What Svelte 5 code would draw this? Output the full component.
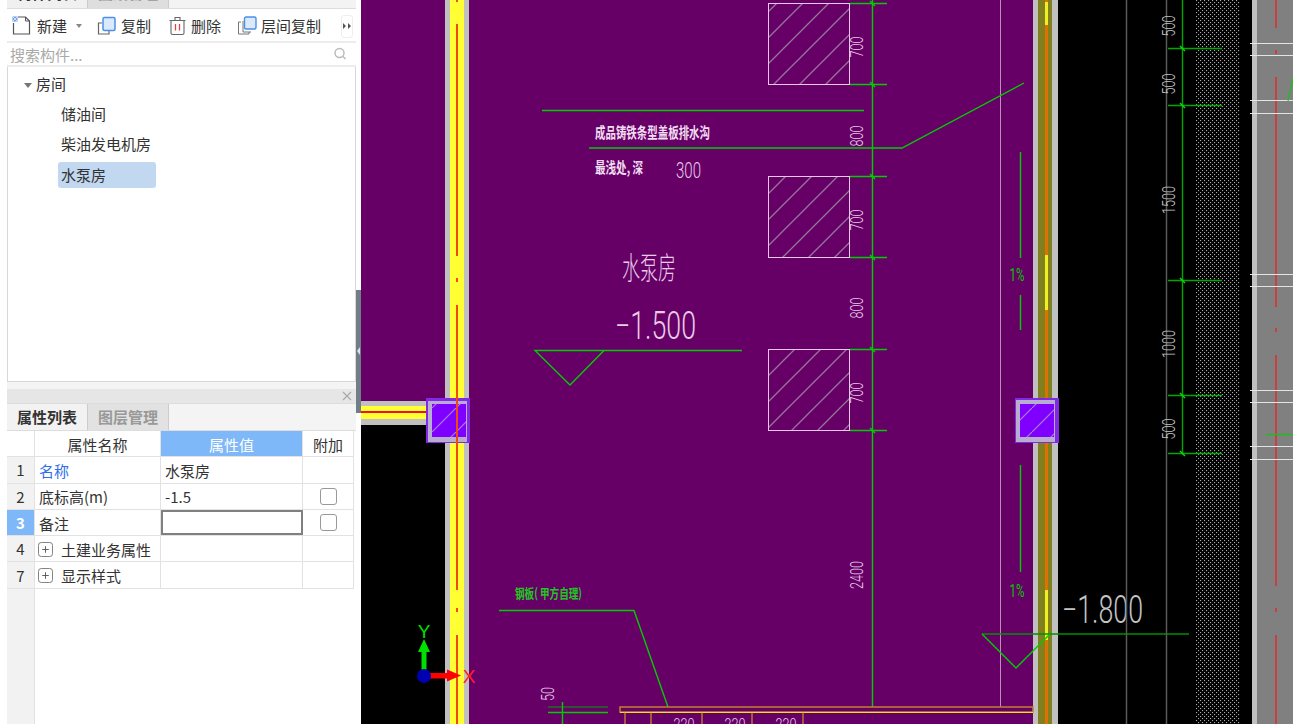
<script>
  const ticks = [3, 84, 176, 257, 349, 430];
  const dims = [
    { y: 47, t: '700' }, { y: 136, t: '800' }, { y: 220, t: '700' },
    { y: 308, t: '800' }, { y: 393, t: '700' }, { y: 575, t: '2400' }
  ];
  const squares = [3, 176, 349];
  const rightDims = [
    { y: 26, t: '500' }, { y: 84, t: '500' }, { y: 200, t: '1500' },
    { y: 344, t: '1000' }, { y: 429, t: '500' }
  ];
  const rightTicks = [48, 105, 280, 395, 453];
  const strips = [43, 55, 100, 113, 274, 286, 390, 402, 446, 459];
  const wallRed = [[0, 2], [24, 256], [278, 282], [305, 590], [608, 612], [635, 724]];
  const stripRed = [[0, 28], [50, 54], [77, 307], [328, 332], [355, 586], [608, 612], [635, 724]];
  const rightYellow = [[2, 25], [255, 310], [590, 640]];
  const beamTicks = [625, 651, 702, 752, 803];
  const beamText = [684, 735, 786];
  const rows = [
    { n: '1', name: '名称', val: '水泵房', link: true },
    { n: '2', name: '底标高(m)', val: '-1.5', check: true },
    { n: '3', name: '备注', val: '', check: true, active: true },
    { n: '4', name: '土建业务属性', val: '', plus: true },
    { n: '7', name: '显示样式', val: '', plus: true }
  ];
  const dimLen = (t) => (t.length === 4 ? 28 : t.length === 2 ? 14 : 21);
</script>

<div class="app">
  <aside class="side">
    <div class="tabs-top">
      <div class="ttab on">构件列表</div>
      <div class="ttab">图纸管理</div>
    </div>

    <div class="toolbar">
      <div class="tool first">
        <svg width="20" height="20" viewBox="0 0 20 20" fill="none">
          <path d="M1.5 7v11h16V5l-4-4H6" stroke="#555" stroke-width="1.2"/>
          <path d="M13.5 1v4h4" stroke="#555" stroke-width="1"/>
          <rect x="0.5" y="0.5" width="5" height="5" fill="#6d9fe8"/>
          <path d="M1 1l4 4M5 1l-4 4" stroke="#fff" stroke-width=".7"/>
        </svg>
        <span>新建</span>
        <i class="caret"></i>
      </div>
      <div class="tool copy">
        <svg width="20" height="20" viewBox="0 0 20 20" fill="none">
          <path d="M5 7H1.5v11H12v-3" stroke="#666" stroke-width="1.2"/>
          <rect x="6" y="1.5" width="12" height="13" rx="1.5" fill="#dce9fb" stroke="#4a90e8" stroke-width="1.5"/>
        </svg>
        <span>复制</span>
      </div>
      <div class="tool del">
        <svg width="17" height="20" viewBox="0 0 17 20" fill="none">
          <path d="M0.5 4.5h16M6 4.5V1.5h5v3M2 4.5V17a1.5 1.5 0 0 0 1.5 1.5h10A1.5 1.5 0 0 0 15 17V4.500" stroke="#666" stroke-width="1.1"/>
          <path d="M6.500 8v6.500M10.500 8v6.500" stroke="#e8413c" stroke-width="1.300"/>
        </svg>
        <span>删除</span>
      </div>
      <div class="tool layer">
        <svg width="20" height="20" viewBox="0 0 20 20" fill="none">
          <path d="M4 6H1.500v12H12v-2" stroke="#777" stroke-width="1"/>
          <path d="M6 5v11h8" stroke="#777" stroke-width="1"/>
          <rect x="7.500" y="1" width="11.500" height="12" rx="1.500" fill="#dce9fb" stroke="#4a90e8" stroke-width="1.400"/>
        </svg>
        <span>层间复制</span>
      </div>
      <div class="more">
        <svg width="8" height="6" viewBox="0 0 8 6"><path d="M0 0l3 3-3 3zM5 0l3 3-3 3z" fill="#555"/></svg>
      </div>
    </div>

    <div class="search">
      <span>搜索构件...</span>
      <svg width="14" height="14" viewBox="0 0 14 14" fill="none">
        <circle cx="6.500" cy="6" r="4.500" stroke="#bbb" stroke-width="1.500"/>
        <path d="M10 9.500l2.500 2.500" stroke="#bbb" stroke-width="1.500"/>
      </svg>
    </div>

    <div class="tree">
      <div class="node root"><i class="tri"></i>房间</div>
      <div class="node leaf">储油间</div>
      <div class="node leaf">柴油发电机房</div>
      <div class="node leaf sel">水泵房</div>
    </div>

    <div class="gap"></div>

    <div class="pane-head">
      <svg width="10" height="10" viewBox="0 0 10 10"><path d="M1 1l8 8M9 1l-8 8" stroke="#aaa" stroke-width="1.200"/></svg>
    </div>

    <div class="ptabs">
      <div class="ptab on">属性列表</div>
      <div class="ptab">图层管理</div>
    </div>

    <div class="grid">
      <div class="row head">
        <div class="c idx"></div>
        <div class="c cname">属性名称</div>
        <div class="c cval hl">属性值</div>
        <div class="c cadd">附加</div>
      </div>
      {#each rows as r}
        <div class="row">
          <div class="c idx" class:idxon={r.active}>{r.n}</div>
          <div class="c nm" class:link={r.link}>
            {#if r.plus}
              <svg class="plus" width="16" height="16" viewBox="0 0 16 16" fill="none">
                <rect x=".5" y=".5" width="15" height="15" rx="3" stroke="#777"/>
                <path d="M4.500 8h7M8 4.500v7" stroke="#555"/>
              </svg>
            {/if}
            {r.name}
          </div>
          <div class="c vl" class:cur={r.active}>{r.val}</div>
          <div class="c ck">
            {#if r.check}<span class="box"></span>{/if}
          </div>
        </div>
      {/each}
      <div class="rest"><div class="restidx"></div></div>
    </div>
  </aside>

  <div class="split">
    <div class="split-dark"><i class="notch"></i></div>
  </div>

  <svg class="cad" width="932" height="724" viewBox="361 0 932 724">
    <defs>
      <pattern id="hatch" patternUnits="userSpaceOnUse" width="26" height="26">
        <path d="M-1 27L27 -1" stroke="#96749a" stroke-width="1.300"/>
        <path d="M-1 1L1 -1M25 27L27 25" stroke="#96749a" stroke-width="1.300"/>
      </pattern>
      <pattern id="colhatch" patternUnits="userSpaceOnUse" width="24" height="24">
        <path d="M0 24L24 0" stroke="#a880d8" stroke-width="1.200"/>
      </pattern>
      <pattern id="dots" patternUnits="userSpaceOnUse" width="4" height="4">
        <rect x="0" y="0" width="1.100" height="1.100" fill="#aaa"/>
        <rect x="2" y="2" width="1.100" height="1.100" fill="#aaa"/>
      </pattern>
    </defs>

    <rect x="361" y="0" width="932" height="724" fill="#660066"/>
    <rect x="361" y="424" width="84" height="300" fill="#000"/>
    <rect x="1058" y="0" width="235" height="724" fill="#000"/>

    <!-- left wall -->
    <rect x="445" y="0" width="24" height="724" fill="#c0c0c0"/>
    <rect x="450" y="0" width="14" height="724" fill="#ffff33"/>
    {#each wallRed as s}
      <rect x="456" y={s[0]} width="2" height={s[1] - s[0]} fill="#f04a10"/>
    {/each}
    <rect x="361" y="401" width="66" height="24" fill="#c0c0c0"/>
    <rect x="361" y="406" width="66" height="13" fill="#ffff33"/>
    <rect x="361" y="411" width="96" height="2" fill="#ee1111"/>

    <!-- right wall -->
    <rect x="1033" y="0" width="25" height="724" fill="#c0c0c0"/>
    <rect x="1038" y="0" width="14" height="724" fill="#808020"/>
    <rect x="1045" y="0" width="3" height="724" fill="#e07000"/>
    {#each rightYellow as s}
      <rect x="1045" y={s[0]} width="3" height={s[1] - s[0]} fill="#f0f020"/>
    {/each}

    <!-- columns -->
    <rect x="426" y="398" width="44" height="45" fill="#8428e8"/>
    <rect x="428" y="401" width="39" height="41" fill="#b8acd0"/>
    <rect x="432" y="404" width="34" height="33" fill="#8000ff"/>
    <rect x="432" y="404" width="34" height="33" fill="url(#colhatch)"/>
    <rect x="456" y="398" width="2" height="45" fill="#f04a10"/>
    <rect x="1015" y="398" width="44" height="45" fill="#8428e8"/>
    <rect x="1016" y="400" width="39" height="42" fill="#b8acd0"/>
    <rect x="1020" y="404" width="34" height="33" fill="#8000ff"/>
    <rect x="1020" y="404" width="34" height="33" fill="url(#colhatch)"/>

    <!-- hatched squares -->
    {#each squares as y}
      <rect x="768.500" y={y + 0.500} width="81" height="81" fill="url(#hatch)" stroke="#e8c8e8" stroke-width="1"/>
    {/each}

    <!-- green dimension line -->
    <line x1="872.500" y1="0" x2="872.500" y2="710" class="gr"/>
    {#each ticks as y}
      <line x1="850" y1={y + 0.500} x2="887" y2={y + 0.500} class="gr"/>
      <path d="M870 {y - 2}l5 5" class="gr"/>
    {/each}
    {#each dims as d}
      <text x="858" y={d.y} transform="rotate(-90 858 {d.y})" class="thin pink dim" text-anchor="middle" dominant-baseline="middle" textLength={dimLen(d.t)} lengthAdjust="spacingAndGlyphs">{d.t}</text>
    {/each}

    <line x1="1000.500" y1="0" x2="1000.500" y2="707" stroke="#b890b8"/>

    <!-- notes -->
    <line x1="542" y1="110.500" x2="864" y2="110.500" class="gr"/>
    <text x="595" y="138" class="cjk note" textLength="115" lengthAdjust="spacingAndGlyphs">成品铸铁条型盖板排水沟</text>
    <polyline points="589,148 902,148 1024,83" class="gr" fill="none"/>
    <text x="595" y="173" class="cjk note" textLength="48" lengthAdjust="spacingAndGlyphs">最浅处, 深</text>
    <text x="676" y="178" class="thin pink n300" textLength="25" lengthAdjust="spacingAndGlyphs">300</text>

    <text x="622" y="279" class="cjkthin pink title" textLength="54" lengthAdjust="spacingAndGlyphs">水泵房</text>
    <text x="615" y="339" class="thin pink lvl" textLength="81" lengthAdjust="spacingAndGlyphs">−1.500</text>
    <polyline points="742,350.500 535,350.500 570,385 604,350.500" class="gr" fill="none"/>

    <!-- slope marks -->
    <line x1="1020.500" y1="152" x2="1020.500" y2="258" class="gr"/>
    <text x="1017" y="281" class="pctx green pct" text-anchor="middle" textLength="15" lengthAdjust="spacingAndGlyphs">1%</text>
    <line x1="1020.500" y1="295" x2="1020.500" y2="330" class="gr"/>
    <line x1="1020.500" y1="465" x2="1020.500" y2="572" class="gr"/>
    <text x="1017" y="597" class="pctx green pct" text-anchor="middle" textLength="15" lengthAdjust="spacingAndGlyphs">1%</text>

    <!-- -1.800 -->
    <text x="1062" y="623" class="thin grey lvl" textLength="81" lengthAdjust="spacingAndGlyphs">−1.800</text>
    <line x1="982" y1="634" x2="1189" y2="634" stroke="#009000" stroke-width="1.500"/>
    <polyline points="982,634 1016,668 1050,634" class="gr" fill="none"/>

    <!-- steel note -->
    <text x="515" y="598" class="cjk steel" textLength="67" lengthAdjust="spacingAndGlyphs">钢板( 甲方自理)</text>
    <polyline points="499,610.500 634,610.500 668,707" class="gr" fill="none"/>

    <!-- bottom beam -->
    <rect x="620" y="707" width="413" height="5" fill="#660066" stroke="#c08030" stroke-width="1.500"/>
    <line x1="620" y1="712.500" x2="1033" y2="712.500" stroke="#f0e020"/>
    {#each beamTicks as x}
      <line x1={x} y1="712" x2={x} y2="724" stroke="#e0b020"/>
    {/each}
    {#each beamText as x}
      <text x={x} y="730" class="thin pink small" text-anchor="middle" textLength="21" lengthAdjust="spacingAndGlyphs">220</text>
    {/each}
    <line x1="548" y1="707" x2="608" y2="707" stroke="#00a000" stroke-width="1.200"/>
    <line x1="548" y1="712.500" x2="608" y2="712.500" class="gr"/>
    <line x1="562.500" y1="702" x2="562.500" y2="724" class="gr"/>
    <text x="549" y="694" transform="rotate(-90 549 694)" class="thin pink dim" text-anchor="middle" dominant-baseline="middle" textLength="14" lengthAdjust="spacingAndGlyphs">50</text>

    <!-- right black area -->
    <line x1="1126.500" y1="0" x2="1126.500" y2="724" stroke="#5a5a5a" stroke-width="1.500"/>
    <line x1="1166.500" y1="0" x2="1166.500" y2="724" stroke="#5a5a5a" stroke-width="1.500"/>
    <rect x="1196" y="0" width="44" height="724" fill="url(#dots)"/>
    <line x1="1182.500" y1="0" x2="1182.500" y2="453" stroke="#00a800" stroke-width="1.400"/>
    {#each rightTicks as y}
      <line x1="1168" y1={y + 0.500} x2="1222" y2={y + 0.500} stroke="#00a800" stroke-width="1.400"/>
      <path d="M1180 {y - 2}l5 5" stroke="#00e000" stroke-width="1.500"/>
    {/each}
    {#each rightDims as d}
      <text x="1170" y={d.y} transform="rotate(-90 1170 {d.y})" class="thin grey dim" text-anchor="middle" dominant-baseline="middle" textLength={dimLen(d.t)} lengthAdjust="spacingAndGlyphs">{d.t}</text>
    {/each}

    <!-- right grey strip -->
    <rect x="1252" y="0" width="41" height="724" fill="#808080"/>
    <rect x="1252" y="0" width="5" height="724" fill="#c0c0c0"/>
    {#each stripRed as s}
      <rect x="1275" y={s[0]} width="2" height={s[1] - s[0]} fill="#c84040"/>
    {/each}
    {#each strips as y}
      <line x1="1250" y1={y + 0.500} x2="1293" y2={y + 0.500} stroke="#e4e4e4" stroke-width="1.200"/>
    {/each}
    <line x1="1266" y1="434.500" x2="1293" y2="434.500" stroke="#00d000" stroke-width="1.200"/>
    <line x1="1288" y1="101" x2="1293" y2="78" stroke="#00d000"/>

    <!-- axes -->
    <rect x="421.500" y="650" width="5" height="22" fill="#00e000"/>
    <path d="M424 639l6 13h-12z" fill="#00e000"/>
    <rect x="428" y="673" width="20" height="5.500" fill="#ff0000"/>
    <path d="M461 675.500l-14 6v-12z" fill="#ff0000"/>
    <circle cx="424" cy="676" r="7" fill="#0000b0"/>
    <text x="424" y="638" class="axis" fill="#00e000" text-anchor="middle">Y</text>
    <text x="469" y="683" class="axis" fill="#ff2020" text-anchor="middle">X</text>
  </svg>
</div>

<style>
  :global(body) {
    margin: 0;
    background: #fff;
  }

  .app {
    display: flex;
    width: 1293px;
    height: 724px;
    overflow: hidden;
    font-family: "Noto Sans CJK SC", "Liberation Sans", sans-serif;
    font-size: 15px;
    color: #333;
  }

  .side {
    flex: 0 0 349px;
    margin-left: 7px;
    display: flex;
    flex-direction: column;
    background: #fff;
  }

  .tabs-top {
    flex: 0 0 8px;
    display: flex;
    align-items: flex-end;
    overflow: hidden;
    background: #f3f3f3;
    border-bottom: 1px solid #dcdcdc;
  }

  .ttab {
    flex: 0 0 81px;
    height: 26px;
    line-height: 22px;
    text-align: center;
    font-weight: 700;
    background: #f0f0f0;
    border-right: 1px solid #ccc;
    box-sizing: border-box;
  }

  .ttab + .ttab {
    background: #dedede;
    color: #999;
  }

  .toolbar {
    flex: 0 0 30px;
    display: flex;
    align-items: center;
    padding: 2px 0 0 5px;
    background: #fff;
    border-bottom: 2px solid #ececec;
  }

  .tool {
    display: flex;
    align-items: center;
    white-space: nowrap;
  }

  .tool span {
    margin-left: 5px;
    line-height: 20px;
  }

  .copy span, .layer span { margin-left: 4px; }

  .first { width: 85px; }
  .copy { width: 72px; }
  .del { width: 68px; }
  .layer { width: 104px; }

  .caret {
    margin-left: 9px;
    border: 3px solid transparent;
    border-top: 4px solid #888;
    margin-top: 3px;
  }

  .more {
    display: flex;
    align-items: center;
    justify-content: center;
    width: 12px;
    height: 23px;
    border: 1px solid #eee;
    border-radius: 3px;
    box-sizing: border-box;
  }

  .search {
    flex: 0 0 22px;
    display: flex;
    align-items: center;
    justify-content: space-between;
    padding: 0 9px 0 3px;
    color: #aaa;
    border-bottom: 2px solid #ececec;
  }

  .tree {
    flex: 0 0 315px;
    box-sizing: border-box;
    padding-top: 2px;
    border-left: 1px solid #d8d8d8;
    border-right: 1px solid #d8d8d8;
    border-bottom: 1px solid #d8d8d8;
  }

  .node {
    height: 30px;
    line-height: 30px;
  }

  .root {
    display: flex;
    align-items: center;
    padding-left: 16px;
  }

  .tri {
    margin: 2px 4px 0 0;
    border: 4px solid transparent;
    border-top: 5px solid #777;
    border-bottom: 0;
  }

  .leaf {
    margin-left: 50px;
    width: 98px;
    padding-left: 3px;
    box-sizing: border-box;
  }

  .sel {
    height: 26px;
    line-height: 26px;
    margin-top: 3px;
    background: #c2d8f0;
    border-radius: 3px;
  }

  .gap {
    flex: 0 0 7px;
    background: #f4f4f4;
  }

  .pane-head {
    flex: 0 0 14px;
    display: flex;
    align-items: center;
    justify-content: flex-end;
    padding-right: 4px;
    background: #e6e6e6;
  }

  .ptabs {
    flex: 0 0 28px;
    display: flex;
    background: #f4f4f4;
    border-top: 1px solid #ddd;
    border-bottom: 1px solid #ddd;
    box-sizing: border-box;
  }

  .ptab {
    width: 81px;
    line-height: 25px;
    text-align: center;
    color: #999;
    font-weight: 700;
    background: #e2e2e2;
    border-right: 1px solid #ccc;
    box-sizing: border-box;
  }

  .ptab.on {
    color: #333;
    background: #f2f2f2;
  }

  .grid {
    flex: 1;
    display: flex;
    flex-direction: column;
    min-height: 0;
    width: 347px;
  }

  .row {
    display: grid;
    grid-template-columns: 28px 126px 142px 51px;
    height: 26.300px;
    border-bottom: 1px solid #e2e2e2;
    box-sizing: border-box;
    flex: 0 0 auto;
  }

  .c {
    display: flex;
    align-items: center;
    padding-left: 3px;
    padding-top: 1px;
    border-right: 1px solid #e2e2e2;
    box-sizing: border-box;
    white-space: nowrap;
  }

  .idx {
    justify-content: center;
    padding: 0;
    background: #f2f2f2;
  }

  .head .idx { background: #fff; }

  .idxon {
    background: #7eb8f8;
    color: #fff;
    font-weight: 700;
  }

  .cname, .cval, .cadd {
    justify-content: center;
    padding-left: 0;
  }

  .hl {
    background: #7eb8f8;
    color: #fff;
  }

  .nm { padding-left: 4px; }
  .link { color: #2f6fe8; }
  .vl { padding-left: 4px; }

  .cur {
    background: #fff;
    border: 2px solid #808080;
  }

  .ck {
    justify-content: center;
    padding: 0;
  }

  .box {
    width: 17px;
    height: 17px;
    border: 1px solid #999;
    border-radius: 3px;
    box-sizing: border-box;
  }

  .plus {
    margin: 0 8px 0 -1px;
    flex: 0 0 auto;
    width: 15px;
    height: 15px;
  }

  .rest {
    flex: 1;
    display: flex;
  }

  .restidx {
    width: 28px;
    background: #f2f2f2;
    border-right: 1px solid #e2e2e2;
    box-sizing: border-box;
  }

  .split {
    flex: 0 0 5px;
    padding-top: 290px;
    background: #fff;
  }

  .split-dark {
    height: 123px;
    background: #6f7f85;
    display: flex;
    align-items: center;
  }

  .notch {
    width: 0;
    height: 0;
    margin: -2px 0 0 1px;
    border: 4px solid transparent;
    border-right: 3px solid #dfe4e6;
    border-left: 0;
  }

  .cad {
    flex: 0 0 932px;
    display: block;
  }

  .gr {
    stroke: #00cc00;
    stroke-width: 1.400;
    fill: none;
  }

  .thin {
    font-family: "Roboto", "Liberation Sans", sans-serif;
    font-weight: 300;
  }

  .pctx {
    font-family: "Roboto", "Liberation Sans", sans-serif;
    font-weight: 400;
  }

  .pink { fill: #e8cce8; }
  .grey { fill: #c4c4c4; }
  .green { fill: #00c800; }

  .cjk {
    font-family: "Noto Sans CJK SC", sans-serif;
    font-weight: 700;
  }

  .cjkthin {
    font-family: "Noto Sans CJK SC", sans-serif;
    font-weight: 300;
  }

  .note {
    font-size: 15px;
    fill: #f0dcf0;
  }

  .steel {
    font-size: 13px;
    fill: #20c820;
  }

  .n300 { font-size: 22px; }
  .title { font-size: 31px; }
  .lvl { font-size: 38px; }
  .dim { font-size: 19px; }
  .pct { font-size: 19px; }
  .small { font-size: 17px; }

  .axis {
    font-family: "Liberation Sans", sans-serif;
    font-size: 19px;
  }
</style>
